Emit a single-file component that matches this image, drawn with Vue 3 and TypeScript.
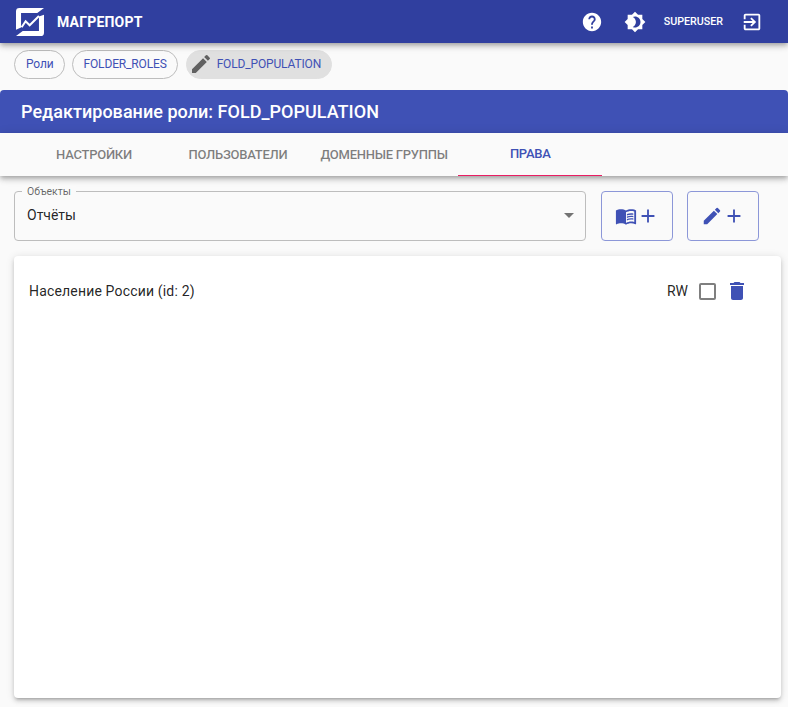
<script setup lang="ts">
import { ref } from "vue";

const crumbs = ref<string[]>(["Роли", "FOLDER_ROLES"]);
const tabs = ref<string[]>(["Настройки", "Пользователи", "Доменные группы", "Права"]);
const activeTab = ref<number>(3);
const roleName = "FOLD_POPULATION";
</script>

<template>
  <div class="page">
    <header class="toolbar">
      <svg class="logo" width="28" height="28" viewBox="2.500 2.500 25 25" fill="none" stroke="#fff">
        <path d="M2.500 22V5.500a3 3 0 0 1 3-3H27.500L21.500 7H7v13z" fill="#fff" stroke="none" />
        <path d="M27.500 8.500V24.500a3 3 0 0 1-3 3H2.500L8.500 23H23V10z" fill="#fff" stroke="none" />
        <path d="M7.500 19.700L11.100 14.300L14.700 17.900L23 9.700" stroke-width="1.800" />
      </svg>
      <span class="brand">МАГРЕПОРТ</span>
      <span class="spacer"></span>
      <svg class="tool-icon help" width="22" height="22" viewBox="0 0 24 24" fill="#fff">
        <path d="M12 2C6.480 2 2 6.480 2 12s4.480 10 10 10 10-4.480 10-10S17.520 2 12 2zm1 17h-2v-2h2v2zm2.070-7.750l-.9.920C13.450 12.900 13 13.500 13 15h-2v-.5c0-1.100.45-2.100 1.170-2.830l1.240-1.260c.37-.36.59-.86.59-1.410 0-1.100-.9-2-2-2s-2 .9-2 2H8c0-2.210 1.790-4 4-4s4 1.790 4 4c0 .88-.36 1.680-.93 2.250z" />
      </svg>
      <svg class="tool-icon theme" width="22" height="22" viewBox="0 0 24 24" fill="#fff">
        <path d="M20 8.690V4h-4.690L12 .69 8.690 4H4v4.690L.69 12 4 15.310V20h4.690L12 23.310 15.310 20H20v-4.690L23.310 12 20 8.690zM12 18c-.89 0-1.740-.2-2.500-.55C11.560 16.500 13 14.420 13 12s-1.440-4.500-3.500-5.450C10.260 6.200 11.110 6 12 6c3.310 0 6 2.690 6 6s-2.690 6-6 6z" />
      </svg>
      <span class="user">SUPERUSER</span>
      <svg class="tool-icon exit" width="22" height="22" viewBox="0 0 24 24" fill="#fff">
        <path d="M10.090 15.590L11.500 17l5-5-5-5-1.410 1.410L12.670 11H3v2h9.670l-2.580 2.590zM19 3H5c-1.110 0-2 .9-2 2v4h2V5h14v14H5v-4H3v4c0 1.100.89 2 2 2h14c1.100 0 2-.9 2-2V5c0-1.100-.9-2-2-2z" />
      </svg>
    </header>

    <nav class="crumbs">
      <a v-for="c in crumbs" :key="c" class="chip">{{ c }}</a>
      <a class="chip current">
        <svg width="24" height="24" viewBox="0 0 24 24" fill="#616161">
          <path d="M3 17.250V21h3.750L17.810 9.940l-3.750-3.750L3 17.250zM20.710 7.040a1 1 0 0 0 0-1.410l-2.340-2.340a1 1 0 0 0-1.410 0l-1.830 1.830 3.750 3.750 1.830-1.830z" />
        </svg>
        {{ roleName }}
      </a>
    </nav>

    <h1 class="title">Редактирование роли: {{ roleName }}</h1>

    <div class="tabs">
      <div
        v-for="(t, i) in tabs"
        :key="t"
        class="tab"
        :class="{ active: i === activeTab }"
      >
        {{ t }}
      </div>
    </div>

    <section class="filters">
      <div class="select">
        <span class="select-label">Объекты</span>
        <span class="select-value">Отчёты</span>
        <span class="arrow"></span>
      </div>
      <button class="add-btn">
        <svg width="22" height="22" viewBox="0 0 24 24" fill="#3f51b5">
          <path d="M21 5c-1.110-.35-2.330-.5-3.500-.5-1.950 0-4.050.4-5.500 1.500-1.450-1.100-3.550-1.500-5.500-1.500S2.450 4.900 1 6v14.650c0 .25.25.5.5.5.1 0 .15-.05.25-.05C3.100 20.450 5.050 20 6.500 20c1.950 0 4.050.4 5.500 1.500 1.350-.85 3.800-1.500 5.500-1.500 1.650 0 3.350.3 4.750 1.050.1.05.15.05.25.05.25 0 .5-.25.5-.5V6c-.6-.45-1.250-.75-2-1zm0 13.500c-1.100-.35-2.300-.5-3.500-.5-1.700 0-4.150.65-5.500 1.500V8c1.350-.85 3.800-1.500 5.500-1.500 1.200 0 2.400.15 3.500.5v11.500z" />
          <path d="M17.500 10.500c.88 0 1.730.09 2.500.26V9.240c-.79-.15-1.640-.24-2.500-.24-1.700 0-3.240.29-4.500.83v1.660c1.130-.64 2.700-.99 4.500-.99zM13 12.490v1.660c1.130-.64 2.700-.99 4.500-.99.880 0 1.730.09 2.500.26V11.900c-.79-.15-1.640-.24-2.500-.24-1.700 0-3.240.3-4.500.83zM17.500 14.330c-1.700 0-3.240.29-4.500.83v1.660c1.130-.64 2.700-.99 4.500-.99.880 0 1.730.09 2.500.26v-1.520c-.79-.16-1.640-.24-2.500-.24z" />
        </svg>
        <svg width="22" height="22" viewBox="0 0 24 24" fill="#3f51b5"><path d="M19 13h-6v6h-2v-6H5v-2h6V5h2v6h6v2z" /></svg>
      </button>
      <button class="add-btn">
        <svg width="22" height="22" viewBox="0 0 24 24" fill="#3f51b5">
          <path d="M3 17.250V21h3.750L17.810 9.940l-3.750-3.750L3 17.250zM20.710 7.040a1 1 0 0 0 0-1.410l-2.340-2.340a1 1 0 0 0-1.410 0l-1.830 1.830 3.750 3.750 1.830-1.830z" />
        </svg>
        <svg width="22" height="22" viewBox="0 0 24 24" fill="#3f51b5"><path d="M19 13h-6v6h-2v-6H5v-2h6V5h2v6h6v2z" /></svg>
      </button>
    </section>

    <main class="card">
      <div class="row">
        <span class="row-name">Население России (id: 2)</span>
        <span class="rw">RW</span>
        <span class="checkbox"></span>
        <svg class="trash" width="24" height="24" viewBox="0 0 24 24" fill="#3f51b5">
          <path d="M6 19c0 1.100.9 2 2 2h8c1.100 0 2-.9 2-2V7H6v12zM19 4h-3.500l-1-1h-5l-1 1H5v2h14V4z" />
        </svg>
      </div>
    </main>
  </div>
</template>

<style scoped>
.page {
  height: 707px;
  background: #fafafa;
  font-family: Roboto, "Liberation Sans", sans-serif;
  display: flex;
  flex-direction: column;
  overflow: hidden;
}

.toolbar {
  height: 43px;
  flex: none;
  display: flex;
  align-items: center;
  background: #303f9f;
  color: #fff;
  padding: 0 14px;
  box-shadow: 0 2px 4px -1px rgba(0, 0, 0, 0.2), 0 4px 5px 0 rgba(0, 0, 0, 0.14), 0 1px 10px 0 rgba(0, 0, 0, 0.12);
  position: relative;
  z-index: 2;
}

.logo {
  margin: 1px 13.500px 0 1.500px;
}

.brand {
  font-size: 14px;
  font-weight: 700;
  letter-spacing: 0.2px;
}

.spacer {
  flex: 1;
}

.tool-icon.help {
  margin-right: 21px;
}

.tool-icon.theme {
  margin-right: 18px;
}

.user {
  font-size: 10.7px;
  font-weight: 500;
  margin-right: 18px;
}

.tool-icon.exit {
  margin-right: 11px;
}

.crumbs {
  height: 47px;
  flex: none;
  display: flex;
  align-items: center;
  gap: 7px;
  padding: 0 14px 5px;
  box-sizing: border-box;
}

.chip {
  height: 29px;
  box-sizing: border-box;
  display: flex;
  align-items: center;
  padding: 0 10px 0 11px;
  border: 1px solid #bdbdbd;
  border-radius: 15px;
  font-size: 12px;
  letter-spacing: -0.15px;
  color: #3f51b5;
}

.chip.current {
  border-color: #e0e0e0;
  background: #e0e0e0;
  margin-left: 1px;
  padding: 0 9.500px 0 2px;
  gap: 4px;
}

.title {
  margin: 0;
  height: 43px;
  flex: none;
  display: flex;
  align-items: center;
  padding: 0 21px 1px;
  background: #3f51b5;
  color: #fff;
  font-size: 18px;
  font-weight: 500;
  letter-spacing: 0.03px;
  border-radius: 4px 4px 0 0;
  box-sizing: border-box;
}

.tabs {
  height: 43px;
  flex: none;
  display: flex;
  padding-left: 22px;
  box-sizing: border-box;
  background: #fafafa;
  box-shadow: 0 2px 4px -1px rgba(0, 0, 0, 0.2), 0 4px 5px 0 rgba(0, 0, 0, 0.14), 0 1px 10px 0 rgba(0, 0, 0, 0.12);
  position: relative;
}

.tab {
  min-width: 144px;
  padding: 0 10.5px 1px;
  box-sizing: border-box;
  display: flex;
  align-items: center;
  justify-content: center;
  font-size: 13px;
  font-weight: 500;
  letter-spacing: -0.25px;
  text-transform: uppercase;
  color: rgba(0, 0, 0, 0.5);
}

.tab.active {
  color: #3f51b5;
  border-bottom: 1px solid #e91e63;
}

.filters {
  flex: none;
  display: flex;
  gap: 14px;
  padding: 15px 29px 15px 14px;
}

.select {
  flex: 1;
  height: 50px;
  margin-right: 1px;
  box-sizing: border-box;
  position: relative;
  display: flex;
  align-items: center;
  padding: 0 12px 2px;
  border: 1px solid #bdbdbd;
  border-radius: 4px;
}

.select-label {
  position: absolute;
  top: -6px;
  left: 7px;
  padding: 0 5px;
  background: #fafafa;
  font-size: 10.5px;
  line-height: 11px;
  color: rgba(0, 0, 0, 0.6);
}

.select-value {
  font-size: 14px;
  color: rgba(0, 0, 0, 0.87);
}

.arrow {
  position: absolute;
  right: 11px;
  top: 21px;
  width: 0;
  height: 0;
  border-left: 5px solid transparent;
  border-right: 5px solid transparent;
  border-top: 5px solid rgba(0, 0, 0, 0.54);
}

.add-btn {
  width: 72px;
  height: 50px;
  box-sizing: border-box;
  display: flex;
  align-items: center;
  justify-content: center;
  padding: 0;
  background: transparent;
  border: 1px solid #8c97d8;
  border-radius: 4px;
}

.card {
  height: 442px;
  flex: none;
  margin: 0 7px 0 14px;
  padding: 23px 32px 0 15px;
  box-sizing: border-box;
  background: #fff;
  border-radius: 4px;
  box-shadow: 0 3px 3px -2px rgba(0, 0, 0, 0.2), 0 3px 4px 0 rgba(0, 0, 0, 0.14), 0 1px 8px 0 rgba(0, 0, 0, 0.12);
}

.row {
  display: flex;
  align-items: center;
  height: 24px;
  font-size: 14px;
  color: rgba(0, 0, 0, 0.87);
}

.row-name {
  flex: 1;
  letter-spacing: 0.17px;
}

.rw {
  margin-right: 10.500px;
}

.checkbox {
  width: 13px;
  height: 13px;
  border: 2px solid rgba(0, 0, 0, 0.5);
  border-radius: 2px;
  margin-right: 9.500px;
}
</style>
